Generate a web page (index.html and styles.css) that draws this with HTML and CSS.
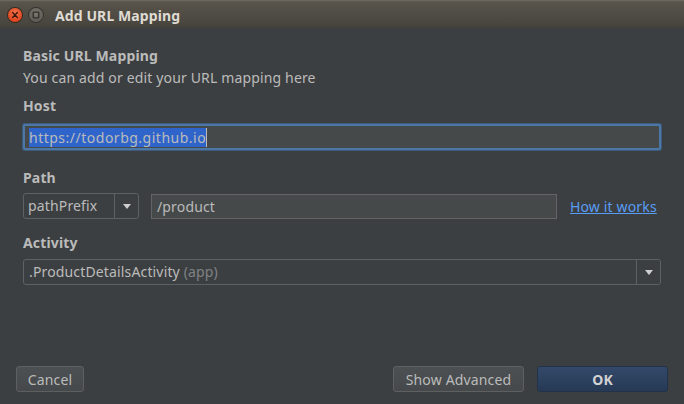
FILE: index.html
```html
<!DOCTYPE html>
<html>
<head>
<meta charset="utf-8">
<link rel="stylesheet" href="styles.css">
</head>
<body>
<div class="window">
  <div class="titlebar">
    <div class="wbtn close">
      <svg width="14" height="14" viewBox="0 0 14 14"><path d="M4.6 4.6 L9.4 9.4 M9.4 4.6 L4.6 9.4" stroke="#3a1a10" stroke-width="1.4" stroke-linecap="round"/></svg>
    </div>
    <div class="wbtn max">
      <svg width="14" height="14" viewBox="0 0 14 14"><rect x="4.2" y="4.2" width="5.6" height="5.6" rx="0.8" fill="none" stroke="#2e2d2a" stroke-width="1.3"/></svg>
    </div>
    <div class="title">Add URL Mapping</div>
  </div>
  <div class="content">
    <div class="heading">Basic URL Mapping</div>
    <div class="subtitle">You can add or edit your URL mapping here</div>
    <div class="label label-host">Host</div>
    <div class="field focused"><span class="selected">https://todorbg.github.io</span><span class="caret"></span></div>
    <div class="label label-path">Path</div>
    <div class="path-row">
      <div class="combo small">
        <span class="combo-text">pathPrefix</span>
        <span class="combo-arrow"><span class="tri"></span></span>
      </div>
      <div class="field path-field">/product</div>
      <a class="link">How it works</a>
    </div>
    <div class="label label-activity">Activity</div>
    <div class="combo wide">
      <span class="combo-text">.ProductDetailsActivity <span class="dim">(app)</span></span>
      <span class="combo-arrow"><span class="tri"></span></span>
    </div>
  </div>
  <div class="footer">
    <button class="btn cancel">Cancel</button>
    <div class="right">
      <button class="btn adv">Show Advanced</button>
      <button class="btn ok">OK</button>
    </div>
  </div>
</div>
</body>
</html>
```
FILE: styles.css
```css
* { box-sizing: border-box; }
html, body { margin: 0; padding: 0; }
body {
  width: 684px;
  height: 404px;
  background: #3c3f41;
  font-family: "Noto Sans", "Open Sans", "DejaVu Sans", sans-serif;
  font-size: 14px;
  letter-spacing: 0.15px;
  color: #bbbbbb;
  overflow: hidden;
}
.window {
  width: 684px;
  height: 404px;
  display: flex;
  flex-direction: column;
}
.titlebar {
  height: 28px;
  flex: none;
  display: flex;
  align-items: center;
  padding-left: 8px;
  background: linear-gradient(#5f5b52 0px, #57534a 2px, #4a4740 22px, #423f3a 28px);
  border-top: 1px solid #6c685e;
}
.wbtn {
  width: 14px;
  height: 14px;
  border-radius: 50%;
  display: flex;
}
.close {
  background: radial-gradient(circle at 50% 35%, #f4724a, #e0461e 70%, #c83c18);
  box-shadow: 0 0 0 1px #3a2a20;
}
.max {
  margin-left: 7px;
  background: radial-gradient(circle at 50% 35%, #7b7870, #5f5c56 70%, #55524c);
  box-shadow: 0 0 0 1px #35332f;
}
.title {
  margin-left: 12px;
  font-weight: bold;
  font-size: 14px;
  letter-spacing: 0.1px;
  color: #dfdbd2;
  margin-top: 1px;
}
.content {
  flex: 1;
  padding: 20px 23px 0 23px;
  display: flex;
  flex-direction: column;
  align-items: flex-start;
}
.heading, .label {
  font-weight: bold;
  line-height: 16px;
  height: 16px;
}
.subtitle {
  margin-top: 6px;
  line-height: 16px;
  height: 16px;
}
.label-host { margin-top: 12px; }
.field {
  height: 26px;
  background: #45494a;
  border: 1px solid #646464;
  line-height: 24px;
  padding: 0 5px;
  white-space: nowrap;
}
.field.focused {
  width: 638px;
  margin-top: 10px;
  border: 2px solid #4c78a8;
  border-radius: 2px;
  box-shadow: 0 0 0 1px #3d5a7a;
  line-height: 22px;
  padding: 0 4px;
  display: flex;
  align-items: center;
}
.selected {
  background: #2f65ca;
  color: #bbbbbb;
  line-height: 19px;
  display: inline-block;
  letter-spacing: 0.5px;
}
.caret {
  display: inline-block;
  width: 1px;
  height: 19px;
  background: #bbbbbb;
}
.label-path { margin-top: 20px; }
.path-row {
  margin-top: 7px;
  display: flex;
  align-items: center;
  width: 638px;
}
.combo {
  height: 26px;
  border: 1px solid #5e6164;
  border-radius: 3px;
  display: flex;
  align-items: stretch;
  background: #3c3f41;
}
.combo.small { width: 116px; }
.combo.wide { width: 638px; margin-top: 8px; }
.combo-text {
  flex: 1;
  padding-left: 4px;
  line-height: 24px;
  white-space: nowrap;
}
.combo.wide .combo-text { padding-left: 5px; }
.dim { color: #7f8284; }
.combo-arrow {
  width: 24px;
  border-left: 1px solid #5e6164;
  display: flex;
  align-items: center;
  justify-content: center;
}
.tri {
  width: 0;
  height: 0;
  border-left: 4px solid transparent;
  border-right: 4px solid transparent;
  border-top: 5px solid #cfcfcf;
  margin-top: 1px;
}
.path-field {
  margin-left: 12px;
  width: 406px;
  height: 25px;
  line-height: 23px;
}
.link {
  margin-left: 13px;
  color: #589df6;
  text-decoration: underline;
  white-space: nowrap;
}
.label-activity { margin-top: 16px; }
.footer {
  flex: none;
  display: flex;
  justify-content: space-between;
  align-items: center;
  padding: 0 16px 12px 16px;
}
.right { display: flex; gap: 13px; }
.btn {
  height: 26px;
  font-family: inherit;
  font-size: 14px;
  letter-spacing: 0.15px;
  color: #bbbbbb;
  border: 1px solid #5e6060;
  border-radius: 3px;
  background: linear-gradient(#4c5052, #46494b);
  padding: 0;
}
.cancel { width: 68px; }
.adv { width: 131px; }
.ok {
  width: 131px;
  font-weight: bold;
  color: #d2d2d2;
  background: linear-gradient(#34496a, #263a55);
  border-color: #22324a;
}
```
